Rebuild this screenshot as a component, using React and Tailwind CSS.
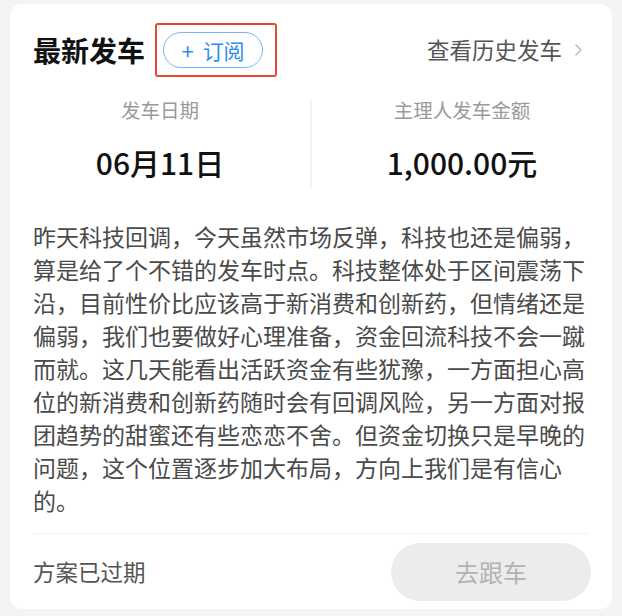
const font = { fontFamily: '"Noto Sans CJK SC", "Noto Sans", sans-serif' };

const text =
    '昨天科技回调，今天虽然市场反弹，科技也还是偏弱，算是给了个不错的发车时点。科技整体处于区间震荡下沿，目前性价比应该高于新消费和创新药，但情绪还是偏弱，我们也要做好心理准备，资金回流科技不会一蹴而就。这几天能看出活跃资金有些犹豫，一方面担心高位的新消费和创新药随时会有回调风险，另一方面对报团趋势的甜蜜还有些恋恋不舍。但资金切换只是早晚的问题，这个位置逐步加大布局，方向上我们是有信心的。';

const App = () => {
    return (
        <div className="w-[622px] h-[616px] bg-[#f4f4f4] pt-[4px] pl-[10px]" style={font}>
            <div className="w-[602px] h-[605px] bg-white rounded-[12px] px-[23px] pt-[22px]">
                {/* header */}
                <div className="flex items-center justify-between h-[48px]">
                    <div className="flex items-center">
                        <span className="text-[28px] leading-[40px] font-bold text-[#111]">最新发车</span>
                        <span className="ml-[10px] border-2 border-[#e8472f] rounded-[3px] pt-[7px] pb-[7px] pl-[6px] pr-[12px]">
                            <span className="flex items-center justify-center w-[100px] h-[36px] rounded-full border-[1.5px] border-[#72b8f6] text-[#2a8cf0] text-[21px] leading-none">
                                <span className="mr-[9px] text-[22px]">+</span>订阅
                            </span>
                        </span>
                    </div>
                    <div className="flex items-center text-[22.5px] text-[#555] mr-[6px]">
                        查看历史发车
                        <svg width="9" height="14" viewBox="0 0 9 14" className="ml-[12px]">
                            <path d="M2 2l5 5-5 5" fill="none" stroke="#b8b8b8" strokeWidth="1.5" strokeLinecap="round" strokeLinejoin="round" />
                        </svg>
                    </div>
                </div>

                {/* stats */}
                <div className="flex mt-[22px] -mx-[23px]">
                    <div className="flex-1 flex flex-col items-center pb-[10px]">
                        <span className="text-[19.5px] leading-[28px] text-[#9a9a9a]">发车日期</span>
                        <span className="mt-[18px] text-[30px] leading-[40px] font-medium text-[#111]">06月11日</span>
                    </div>
                    <div className="w-[2px] my-[4px] bg-[#f2f2f2]" />
                    <div className="flex-1 flex flex-col items-center pb-[10px]">
                        <span className="text-[19.5px] leading-[28px] text-[#9a9a9a]">主理人发车金额</span>
                        <span className="mt-[18px] text-[30px] leading-[40px] font-medium text-[#111]">1,000.00元</span>
                    </div>
                </div>

                {/* body */}
                <p className="mt-[28px] text-[23px] leading-[33px] text-[#4a4a4a]">{text}</p>

                <div className="mt-[16px] h-px bg-[#f1f1f1]" />

                {/* footer */}
                <div className="flex items-center justify-between mt-[9px]">
                    <span className="text-[22.5px] text-[#555]">方案已过期</span>
                    <button
                        type="button"
                        className="w-[200px] h-[58px] rounded-full bg-[#ececec] text-[24px] text-[#b2b2b2] mr-[-2px]"
                    >
                        去跟车
                    </button>
                </div>
            </div>
        </div>
    );
};

export default App;
